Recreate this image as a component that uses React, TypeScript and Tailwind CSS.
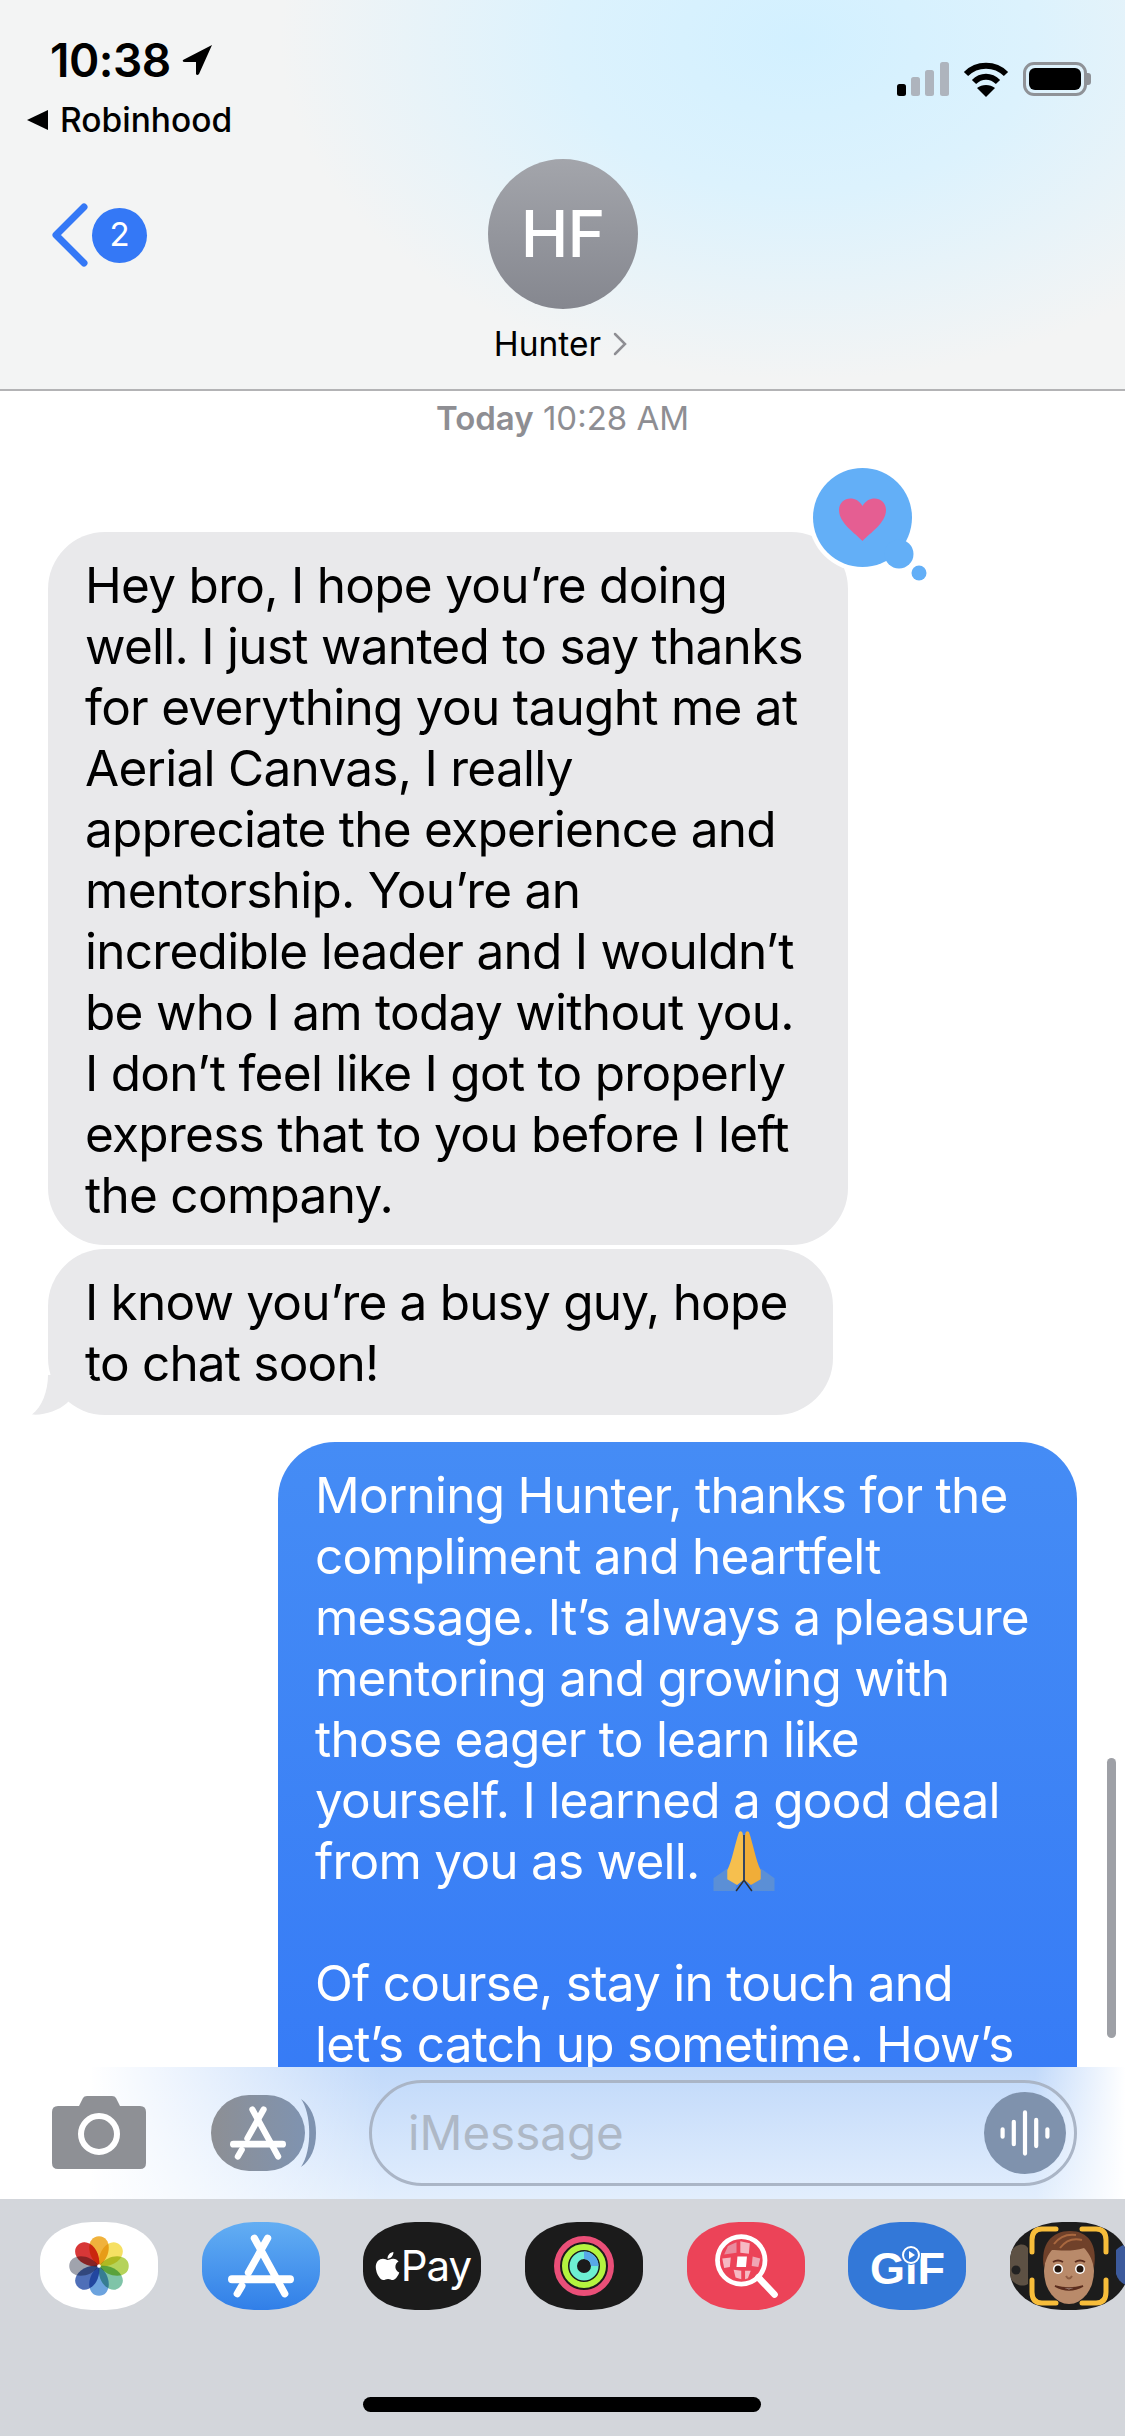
import React from 'react';
import { FaApple } from 'react-icons/fa';

const inbound = [
  'Hey bro, I hope you’re doing',
  'well. I just wanted to say thanks',
  'for everything you taught me at',
  'Aerial Canvas, I really',
  'appreciate the experience and',
  'mentorship. You’re an',
  'incredible leader and I wouldn’t',
  'be who I am today without you.',
  'I don’t feel like I got to properly',
  'express that to you before I left',
  'the company.',
];

const AppStoreGlyph = ({ className }: { className?: string }) => (
  <svg viewBox="0 0 100 100" className={className} fill="none" stroke="white" strokeLinecap="round">
    <path d="M60 8 L31 60" strokeWidth="11" />
    <path d="M40 8 L86 92" strokeWidth="11" />
    <path d="M6 70 H94" strokeWidth="12" />
    <path d="M21 80 L14 92" strokeWidth="11" />
  </svg>
);

const Flower = () => {
  const petals = ['#f0b23c', '#f6e063', '#b5d35a', '#7fc4a8', '#6ca3de', '#4f6fb8', '#a0a3ad', '#e79aa3', '#ee5a55'];
  return (
    <svg viewBox="0 0 100 100" className="w-[62px] h-[62px]">
      {petals.map((color, i) => (
        <g key={color} transform={`rotate(${i === 8 ? -45 : i * 45} 50 50)`} className="mix-blend-multiply">
          <path d="M50 50 C28 34 30 2 50 2 C70 2 72 34 50 50 Z" fill={color} />
        </g>
      ))}
      <circle cx="50" cy="50" r="3" fill="white" />
    </svg>
  );
};

const Rings = () => (
  <svg viewBox="0 0 60 60" className="w-[60px] h-[60px]" fill="none">
    <circle cx="30" cy="30" r="27" stroke="#ea4f78" strokeWidth="6" />
    <circle cx="30" cy="30" r="19" stroke="#b4f43f" strokeWidth="6" />
    <circle cx="30" cy="30" r="10.75" stroke="#6df0d2" strokeWidth="7.5" />
    <path d="M30 19.25 A10.75 10.75 0 0 1 40.75 30" stroke="#58a8e8" strokeWidth="7.5" />
  </svg>
);

const Globe = () => (
  <svg viewBox="-3 -2 80 80" className="w-[76px] h-[76px]" fill="none">
    <circle cx="32" cy="32" r="25" fill="#ec4358" stroke="white" strokeWidth="5" />
    <path d="M50 50 L67 68" stroke="white" strokeWidth="7" strokeLinecap="round" />
    <g fill="#f6b9c3">
      <path d="M18 17 L27 13 L27 24 L14 26 Z" fill="#e98c9d" />
      <path d="M31 12 L41 14 L40 25 L31 24 Z" />
      <path d="M12 30 L21 29 L20 39 L14 40 Z" />
      <path d="M44 28 L52 30 L50 39 L43 38 Z" fill="#f0a6b4" />
      <path d="M24 42 L32 43 L32 52 L26 50 Z" />
      <path d="M36 43 L42 43 L39 51 L36 52 Z" />
    </g>
    <path d="M28 28 L38 28 L37 39 L27 39 Z" fill="white" />
  </svg>
);

const Memoji = () => (
  <svg viewBox="0 0 118 88" className="w-full h-full">
    <rect width="118" height="88" fill="#1c1c1c" />
    <path d="M0 30 C6 22 14 20 18 26 L18 62 C12 66 4 62 0 56 Z" fill="#5d5144" />
    <circle cx="6" cy="48" r="4.5" fill="#222" />
    <path d="M106 28 C110 24 114 22 118 22 L118 64 C112 62 108 58 106 52 Z" fill="#3c5a9c" />
    <path d="M46 7 H32 Q22 7 22 18 V30" fill="none" stroke="#f7bd3a" strokeWidth="5" strokeLinecap="round" />
    <path d="M72 7 H86 Q96 7 96 18 V30" fill="none" stroke="#f7bd3a" strokeWidth="5" strokeLinecap="round" />
    <path d="M46 81 H32 Q22 81 22 70 V58" fill="none" stroke="#f7bd3a" strokeWidth="5" strokeLinecap="round" />
    <path d="M72 81 H86 Q96 81 96 70 V58" fill="none" stroke="#f7bd3a" strokeWidth="5" strokeLinecap="round" />
    <ellipse cx="59" cy="49" rx="25" ry="33" fill="#b98a6a" />
    <path d="M34 46 C30 22 42 9 60 9 C78 9 88 22 84 46 C82 36 78 30 74 26 C62 30 48 28 42 28 C38 32 35 40 34 46 Z" fill="#70412a" />
    <path d="M44 22 C50 14 58 12 66 13 M50 26 C56 18 64 16 72 18" fill="none" stroke="#a9683f" strokeWidth="2" />
    <ellipse cx="48" cy="47" rx="5" ry="5" fill="white" />
    <ellipse cx="70" cy="47" rx="5" ry="5" fill="white" />
    <circle cx="48" cy="47" r="3.5" fill="#23160f" />
    <circle cx="70" cy="47" r="3.5" fill="#23160f" />
    <path d="M43 40 Q48 37 53 40 M65 40 Q70 37 75 40" fill="none" stroke="#5b2d1e" strokeWidth="2" />
    <path d="M56 54 Q59 59 62 54" fill="none" stroke="#8e5f44" strokeWidth="2" />
    <path d="M45 64 Q59 72 73 64 Q59 68 45 64 Z" fill="#fff" stroke="#5b2d1e" strokeWidth="1.5" />
  </svg>
);

const PrayingHands = () => (
  <svg viewBox="0 0 62 62" className="inline-block w-[62px] h-[61px] align-top">
    <path d="M0 48 L14 38 L24 52 L22 61 L0 61 Z" fill="#5b8fd6" />
    <path d="M62 48 L48 38 L38 52 L40 61 L62 61 Z" fill="#5b8fd6" />
    <path d="M26 1 C29 -1 30 2 30 6 L30 50 L24 55 L14 49 L14 40 C19 30 22 12 26 1 Z" fill="#f6bf4e" />
    <path d="M36 1 C33 -1 32 2 32 6 L32 50 L38 55 L48 49 L48 40 C43 30 40 12 36 1 Z" fill="#f0ad38" />
    <path d="M31 4 V50 M23 61 L31 50 L39 61" stroke="#33302c" strokeWidth="1.5" fill="none" />
  </svg>
);

export default function App() {
  return (
    <div className="relative w-[1125px] h-[2436px] flex flex-col overflow-hidden bg-white font-['Inter',sans-serif]">
      {/* nav header */}
      <header className="h-[391px] shrink-0 flex flex-col border-b-2 border-[#b3b3b5] bg-[#f3f4f4] bg-[radial-gradient(ellipse_520px_340px_at_800px_40px,#d2f0ff_0%,#dcf2fd_45%,#f3f4f4_100%)]">
        <div className="flex justify-between h-[150px] shrink-0">
          <div className="pl-[26px] pt-[34px]">
            <div className="flex items-center pl-[24px] h-[52px]">
              <span className="text-[46px] leading-[52px] font-semibold text-black tracking-[-0.5px]">10:38</span>
              <svg viewBox="0 0 30 30" className="w-[30px] h-[30px] ml-[11px]">
                <path d="M30 0 L1 15 Q0 17 3 17 L14 17 L14 29 Q15 31 17 29 Z" fill="black" />
              </svg>
            </div>
            <div className="flex items-center mt-[16px] h-[36px]">
              <svg viewBox="0 0 22 22" className="w-[22px] h-[22px]">
                <path d="M22 1 V21 L1 11 Z" fill="black" />
              </svg>
              <span className="ml-[12px] text-[33.5px] leading-[36px] font-medium text-black">Robinhood</span>
            </div>
          </div>
          <div className="flex items-start gap-[14px] pt-[62px] pr-[34px]">
            <svg viewBox="0 0 52 34" className="w-[52px] h-[34px]">
              <rect x="0" y="22" width="9" height="12" rx="2.5" fill="black" />
              <rect x="14" y="15" width="9" height="19" rx="2.5" fill="#aeb4bd" />
              <rect x="28" y="8" width="9" height="26" rx="2.5" fill="#aeb4bd" />
              <rect x="43" y="0" width="9" height="34" rx="2.5" fill="#aeb4bd" />
            </svg>
            <svg viewBox="0 0 46 36" className="w-[46px] h-[36px]" fill="none" stroke="black" strokeWidth="6">
              <path d="M3 12 C14 1 32 1 43 12" />
              <path d="M11 20 C18 13 28 13 35 20" />
              <path d="M23 35 L14 26 C19 22 27 22 32 26 Z" fill="black" stroke="none" />
            </svg>
            <div className="flex items-center">
              <div className="w-[64px] h-[34px] rounded-[11px] border-[3px] border-[#8f9297] p-[3px]">
                <div className="w-full h-full rounded-[6px] bg-black" />
              </div>
              <div className="w-[4px] h-[12px] rounded-r-[3px] bg-[#8f9297]" />
            </div>
          </div>
        </div>
        <div className="relative flex flex-col items-center">
          <div className="absolute left-[50px] top-[53px] flex items-center">
            <svg viewBox="0 0 38 64" className="w-[38px] h-[64px]" fill="none">
              <path d="M34 4 L6 32 L34 60" stroke="#3478f6" strokeWidth="7" strokeLinecap="round" strokeLinejoin="round" />
            </svg>
            <div className="ml-[4px] w-[55px] h-[55px] rounded-full bg-[#3478f6] flex items-center justify-center text-white text-[33px] font-normal">2</div>
          </div>
          <div className="mt-[9px] w-[150px] h-[150px] rounded-full bg-gradient-to-b from-[#a3a5ab] to-[#85878f] flex items-center justify-center text-white text-[64px] font-medium tracking-[-1px]">HF</div>
          <div className="mt-[15px] flex items-center h-[40px] pr-[4px]">
            <span className="text-[33.5px] text-black">Hunter</span>
            <svg viewBox="0 0 14 24" className="w-[14px] h-[24px] ml-[12px]" fill="none">
              <path d="M2 2 L12 12 L2 22" stroke="#8e8e93" strokeWidth="2.5" strokeLinecap="round" />
            </svg>
          </div>
        </div>
      </header>

      {/* conversation */}
      <main className="relative flex-1 min-h-0 overflow-hidden">
        <div className="pt-[7px] text-center text-[33px] leading-[40px] text-[#8e8e93]">
          <span className="font-semibold">Today</span> 10:28 AM
        </div>
        <div className="relative mt-[94px] ml-[48px] w-[800px] rounded-[57px] bg-[#e9e9eb] pl-[37px] pt-[23px] pb-[19px] text-[49.5px] leading-[61px] tracking-[-0.72px] text-black whitespace-nowrap">
          {inbound.map((line) => (
            <div key={line}>{line}</div>
          ))}
          <svg viewBox="0 0 130 130" className="absolute left-[760px] top-[-69px] w-[130px] h-[130px]">
            <circle cx="54.5" cy="54.5" r="54" fill="white" />
            <circle cx="54.5" cy="54.5" r="49.5" fill="#63aff7" />
            <circle cx="91" cy="91" r="14.5" fill="#63aff7" />
            <circle cx="111" cy="110" r="7.5" fill="#63aff7" />
            <path d="M54.5 78 C47 70 31 60 31 47 C31 34 48 31 54.5 43 C61 31 78 34 78 47 C78 60 62 70 54.5 78 Z" fill="#e55e92" />
          </svg>
        </div>
        <div className="relative mt-[4px] ml-[48px] w-[785px] rounded-[57px] bg-[#e9e9eb] pl-[37px] pt-[23px] pb-[21px] text-[49.5px] leading-[61px] tracking-[-0.8px] text-black whitespace-nowrap">
          <div>I know you’re a busy guy, hope</div>
          <div>to chat soon!</div>
          <svg viewBox="0 0 60 40" className="absolute left-[-16px] bottom-0 w-[60px] h-[40px]">
            <path d="M16 0 C16 16 10 32 0 39.5 C12 40.5 26 36 35 28 L60 0 Z" fill="#e9e9eb" />
          </svg>
        </div>
        <div className="mt-[27px] ml-[278px] w-[799px] h-[760px] rounded-[57px] bg-gradient-to-b from-[#458cf5] to-[#3478f6] pl-[37px] pt-[23px] text-[49.5px] leading-[61px] tracking-[-0.76px] text-white whitespace-nowrap">
          <div>Morning Hunter, thanks for the</div>
          <div>compliment and heartfelt</div>
          <div>message. It’s always a pleasure</div>
          <div>mentoring and growing with</div>
          <div>those eager to learn like</div>
          <div>yourself. I learned a good deal</div>
          <div>from you as well. <PrayingHands /></div>
          <div className="h-[61px]" />
          <div>Of course, stay in touch and</div>
          <div>let’s catch up sometime. How’s</div>
        </div>
        <div className="absolute right-[9px] bottom-[29px] w-[9px] h-[280px] rounded-full bg-[#9ea0a6]" />
      </main>

      {/* composer */}
      <div className="h-[132px] shrink-0 flex items-center bg-[linear-gradient(90deg,#ffffff_8%,#ffffff00_34%,#ffffff00_92%,#ffffff_100%),linear-gradient(180deg,#c1d9fa,#e2eefd)] pl-[52px] pr-[48px]">
        <svg viewBox="0 0 94 74" className="w-[94px] h-[74px] shrink-0">
          <path d="M6 10 H27 L31 2 Q32 0 35 0 H60 Q63 0 64 2 L68 10 H88 Q94 10 94 16 V67 Q94 73 88 73 H6 Q0 73 0 67 V16 Q0 10 6 10 Z" fill="#8e9095" />
          <circle cx="47" cy="38" r="18" fill="none" stroke="white" strokeWidth="6" />
        </svg>
        <div className="relative ml-[65px] w-[94px] h-[76px] shrink-0 rounded-full bg-gradient-to-r from-[#8d8f94] to-[#7f93b0] flex items-center justify-center">
          <AppStoreGlyph className="w-[56px] h-[56px]" />
          <svg viewBox="0 0 18 70" className="absolute left-[87px] top-[3px] w-[18px] h-[70px]">
            <path d="M3 1 C13 14 15 52 3 69 C13 62 18 50 18 35 C18 20 13 8 3 1 Z" fill="#7f93b0" />
          </svg>
        </div>
        <div className="ml-[64px] flex-1 h-[106px] rounded-full border-[3px] border-[#aab5c6] flex items-center justify-between pl-[36px] pr-[8px]">
          <span className="text-[47.5px] text-[#aeb8c6]">iMessage</span>
          <div className="w-[82px] h-[82px] rounded-full bg-[#7f92ad] flex items-center justify-center">
            <svg viewBox="0 0 60 50" className="w-[56px] h-[48px]" stroke="white" strokeWidth="4.5" strokeLinecap="round">
              <path d="M6 21 V29 M18 13 V37 M30 3 V47 M42 11 V39 M54 21 V29" />
            </svg>
          </div>
        </div>
      </div>

      {/* app drawer */}
      <div className="relative shrink-0 h-[237px] bg-[#d3d6db] pl-[40px] pt-[23px] flex gap-[43.7px]">
        <div className="w-[118px] h-[88px] shrink-0 rounded-[44%] bg-white flex items-center justify-center isolate">
          <Flower />
        </div>
        <div className="w-[118px] h-[88px] shrink-0 rounded-[44%] bg-gradient-to-b from-[#63aef3] to-[#317fe8] flex items-center justify-center">
          <AppStoreGlyph className="w-[66px] h-[66px]" />
        </div>
        <div className="w-[118px] h-[88px] shrink-0 rounded-[44%] bg-[#1b1b1b] flex items-center justify-center text-white">
          <FaApple className="w-[27px] h-[32px]" />
          <span className="text-[42px] leading-none tracking-[-1px]">Pay</span>
        </div>
        <div className="w-[118px] h-[88px] shrink-0 rounded-[44%] bg-[#1b1b1b] flex items-center justify-center">
          <Rings />
        </div>
        <div className="w-[118px] h-[88px] shrink-0 rounded-[44%] bg-[#ec4358] flex items-center justify-center">
          <Globe />
        </div>
        <div className="relative w-[118px] h-[88px] shrink-0 rounded-[44%] bg-[#3378d8] flex items-center justify-center text-white text-[45px] leading-none font-bold font-['Liberation_Sans',sans-serif]">
          <span className="mt-[4px]">GiF</span>
          <svg viewBox="0 0 20 20" className="absolute left-[53px] top-[23px] w-[20px] h-[20px]">
            <circle cx="10" cy="10" r="10" fill="#3378d8" />
            <circle cx="10" cy="10" r="8" fill="none" stroke="white" strokeWidth="2" />
            <path d="M8 6 L14 10 L8 14 Z" fill="white" />
          </svg>
        </div>
        <div className="w-[118px] h-[88px] shrink-0 rounded-[44%] overflow-hidden">
          <Memoji />
        </div>
        <div className="absolute left-[363px] top-[198px] w-[398px] h-[15px] rounded-full bg-black" />
      </div>
    </div>
  );
}
